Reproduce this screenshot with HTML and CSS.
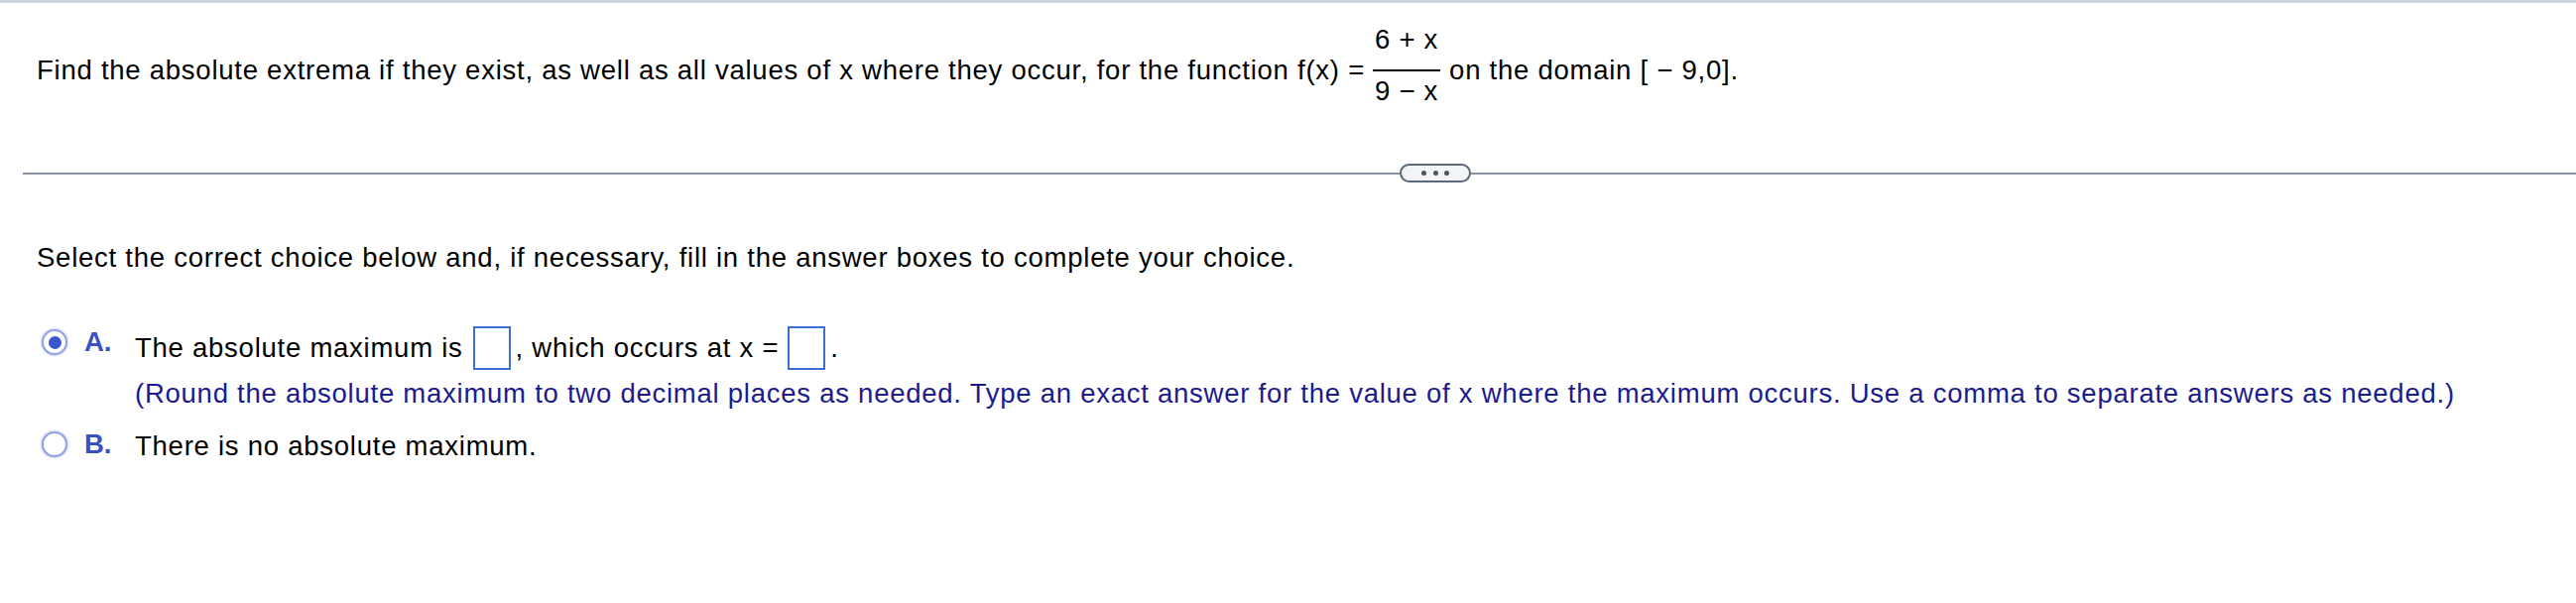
FILE: index.html
```html
<!DOCTYPE html>
<html>
<head>
<meta charset="utf-8">
<link rel="stylesheet" href="styles.css">
</head>
<body>
<div class="topbar"></div>
<div class="question">Find the absolute extrema if they exist, as well as all values of x where they occur, for the function f(x) =<span class="frac"><span class="num">6 + x</span><span class="bar"></span><span class="den">9 &minus; x</span></span>on the domain [ &minus; 9,0].</div>
<div class="divider">
  <div class="line-left"></div>
  <div class="pill"><span class="dot"></span><span class="dot"></span><span class="dot"></span></div>
  <div class="line-right"></div>
</div>
<div class="prompt">Select the correct choice below and, if necessary, fill in the answer boxes to complete your choice.</div>
<div class="choices">
  <div class="choice choice-a">
    <div class="head">
      <span class="radio checked"><span class="inner"></span></span>
      <span class="letter">A.</span>
    </div>
    <div class="content">
      <div class="first">The absolute maximum is<span class="box box-1"></span>, which occurs at x =<span class="box box-2"></span>.</div>
      <div class="hint">(Round the absolute maximum to two decimal places as needed. Type an exact answer for the value of x where the maximum occurs. Use a comma to separate answers as needed.)</div>
    </div>
  </div>
  <div class="choice choice-b">
    <div class="head">
      <span class="radio"></span>
      <span class="letter">B.</span>
    </div>
    <div class="content">
      <div class="first">There is no absolute maximum.</div>
    </div>
  </div>
</div>
</body>
</html>
```
FILE: styles.css
```css
html, body {
  margin: 0;
  padding: 0;
  background: #ffffff;
}
body {
  font-family: "Liberation Sans", Arial, sans-serif;
  font-size: 27.5px;
  letter-spacing: 0.75px;
  line-height: 30px;
  color: #000000;
  width: 2597px;
  height: 608px;
  overflow: hidden;
}
.topbar {
  height: 3px;
  background: #cfd3de;
}
.question {
  margin-top: 22px;
  padding-left: 37px;
  white-space: nowrap;
}
.frac {
  display: inline-flex;
  flex-direction: column;
  align-items: stretch;
  vertical-align: 31px;
  margin: 0 9px 0 8px;
}
.frac .num, .frac .den {
  line-height: 30px;
  text-align: center;
  padding: 0 2px;
}
.frac .bar {
  height: 2px;
  background: #000;
  margin: 15px 0 5px 0;
}
.divider {
  margin-top: 58px;
  display: flex;
  align-items: center;
  height: 19px;
}
.line-left {
  margin-left: 23px;
  width: 1388px;
  height: 2px;
  background: #8b93a3;
}
.line-right {
  flex: 1;
  height: 2px;
  background: #8b93a3;
}
.pill {
  box-sizing: border-box;
  width: 72px;
  height: 19px;
  border: 2px solid #5b6a7b;
  border-radius: 10px;
  background: #f3f4f7;
  display: flex;
  align-items: center;
  justify-content: center;
  gap: 6.5px;
}
.dot {
  width: 5px;
  height: 5px;
  border-radius: 50%;
  background: #4b5563;
}
.prompt {
  margin-top: 61px;
  padding-left: 37px;
  white-space: nowrap;
}
.choices {
  margin-top: 54px;
  padding-left: 42px;
}
.choice {
  display: flex;
  align-items: flex-start;
}
.head {
  display: flex;
  align-items: center;
  height: 30px;
  flex: 0 0 auto;
}
.choice-a .head {
  margin-top: 1px;
}
.radio {
  box-sizing: border-box;
  width: 26px;
  height: 26px;
  border-radius: 50%;
  border: 2px solid #8ea2e2;
  box-shadow: 0 0 2px 1px rgba(170, 185, 225, 0.55);
  background: #fff;
  display: flex;
  align-items: center;
  justify-content: center;
}
.radio .inner {
  width: 13px;
  height: 13px;
  border-radius: 50%;
  background: #3a57c9;
}
.letter {
  margin-left: 17px;
  width: 51px;
  font-weight: bold;
  color: #3b50c2;
  letter-spacing: 0;
}
.content {
  white-space: nowrap;
}
.box {
  display: inline-block;
  box-sizing: border-box;
  width: 38px;
  height: 44px;
  border: 2px solid #3d6fd6;
  vertical-align: -13px;
}
.box-1 {
  margin: 0 5px 0 10px;
}
.box-2 {
  margin: 0 5px 0 9px;
}
.hint {
  margin-top: 9px;
  color: #1b1b8f;
}
.choice-b {
  margin-top: 23px;
}
.choice-b .head {
  margin-top: -2px;
}
```
